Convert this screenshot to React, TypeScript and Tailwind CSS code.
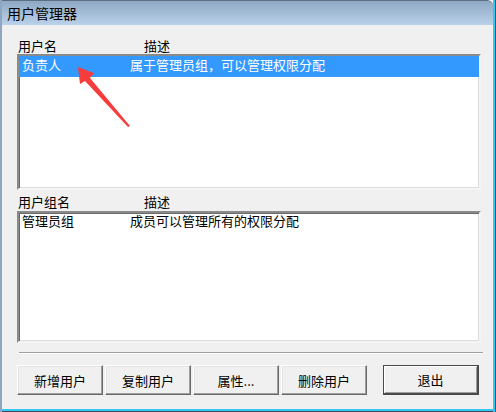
const users = [{ name: "负责人", desc: "属于管理员组，可以管理权限分配" }];
const groups = [{ name: "管理员组", desc: "成员可以管理所有的权限分配" }];
const actions = ["新增用户", "复制用户", "属性...", "删除用户"];

const listBox =
  "relative bg-white border-2 border-t-[#8a8a8a] border-l-[#8a8a8a] border-r-[#f4f4f4] border-b-[#f4f4f4] shadow-[inset_1px_1px_0_#6a6a6a,inset_-1px_-1px_0_#dcdcdc]";

function Arrow() {
  return (
    <svg className="absolute left-0 top-0 pointer-events-none" width="496" height="412" viewBox="0 0 496 412">
      <polygon points="76,67 92,73 88,78 128,126 126,127 83,81 78,84" fill="#f63c3c" />
    </svg>
  );
}

export default function App() {
  return (
    <div className="relative w-[496px] h-[412px] bg-[#f0f0f0] font-['Noto_Sans_CJK_SC',sans-serif] text-[13px] text-black overflow-hidden border-l-2 border-l-[#8ea6c0] shadow-[inset_-1px_0_0_#3b4b5a,inset_-3px_0_0_#36c8f0,inset_0_-1px_0_#3b4b5a,inset_0_-3px_0_#36c8f0]">
      <div className="h-[25px] flex items-center pl-[5px] text-[14px] bg-gradient-to-b from-[#8fa9c4] to-[#bad1ea] border-t border-t-[#5c6e80] rounded-tr-[6px] mr-[3px] leading-[15px]">
        用户管理器
      </div>

      <div className="pl-[15px] pr-[15px] pt-[13px] flex flex-col">
        <div className="flex h-[15px] leading-[15px] pl-[1px]">
          <span className="w-[126px]">用户名</span>
          <span>描述</span>
        </div>
        <div className={`${listBox} mt-[1px] h-[136px]`}>
          {users.map((u) => (
            <div key={u.name} className="flex h-[21px] pt-[1px] leading-[15px] bg-[#3399ff] text-white pl-[3px]">
              <span className="w-[108px]">{u.name}</span>
              <span>{u.desc}</span>
            </div>
          ))}
        </div>

        <div className="flex h-[15px] leading-[15px] pl-[1px] mt-[4px]">
          <span className="w-[126px]">用户组名</span>
          <span>描述</span>
        </div>
        <div className={`${listBox} mt-[2px] h-[132px]`}>
          {groups.map((g) => (
            <div key={g.name} className="flex h-[18px] leading-[15px] pl-[3px]">
              <span className="w-[108px]">{g.name}</span>
              <span>{g.desc}</span>
            </div>
          ))}
        </div>

        <div className="mt-[9px] ml-[2px] mr-[-2px] h-[2px] border-t border-t-[#a0a0a0] border-b border-b-white" />

        <div className="mt-[11px] flex">
          {actions.map((a) => (
            <button
              key={a}
              className="w-[86px] h-[30px] mr-[2px] flex items-center justify-center bg-[#f0f0f0] border border-t-white border-l-white border-r-[#696969] border-b-[#696969] shadow-[inset_-1px_-1px_0_#a0a0a0,inset_1px_1px_0_#e3e3e3] leading-[15px]"
            >
              {a}
            </button>
          ))}
          <button className="ml-[14px] w-[96px] h-[30px] flex items-center justify-center bg-[#f0f0f0] border border-[#4a4a4a] border-b-2 border-r-2 shadow-[inset_1px_1px_0_#fff,inset_-1px_-1px_0_#a0a0a0] leading-[15px]">
            退出
          </button>
        </div>
      </div>

      <Arrow />
    </div>
  );
}
